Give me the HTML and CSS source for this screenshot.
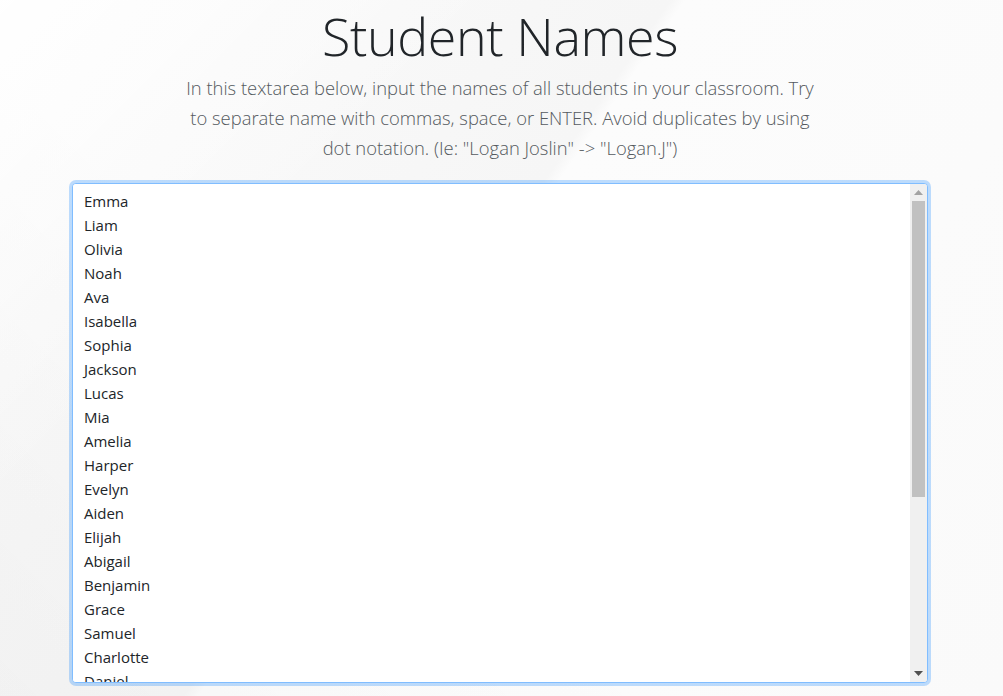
FILE: index.html
```html
<!DOCTYPE html>
<html lang="en">
<head>
<meta charset="utf-8">
<title>Student Names</title>
<link rel="stylesheet" href="styles.css">
</head>
<body>
<main class="page">
  <h1 class="title">Student Names</h1>
  <p class="lead">In this textarea below, input the names of all students in your classroom. Try to separate name with commas, space, or ENTER. Avoid duplicates by using dot notation. (Ie: "Logan Joslin" -&gt; "Logan.J")</p>
  <div class="field">
    <textarea class="names" id="names" spellcheck="false">Emma
Liam
Olivia
Noah
Ava
Isabella
Sophia
Jackson
Lucas
Mia
Amelia
Harper
Evelyn
Aiden
Elijah
Abigail
Benjamin
Grace
Samuel
Charlotte
Daniel
Emily
Henry
Ella
Matthew
Scarlett
Michael
Chloe
James
Lily
Alexander
Zoe</textarea>
    <div class="scrollbar" aria-hidden="true">
      <div class="sb-btn">
        <svg width="9" height="5" viewBox="0 0 9 5"><polygon points="0,5 9,5 4.5,0" fill="#a3a3a3"/></svg>
      </div>
      <div class="sb-track"><div class="sb-thumb"></div></div>
      <div class="sb-btn">
        <svg width="9" height="5" viewBox="0 0 9 5"><polygon points="0,0 9,0 4.5,5" fill="#505050"/></svg>
      </div>
    </div>
  </div>
</main>
<script src="app.js"></script>
</body>
</html>
```

FILE: styles.css
```css
html, body {
  margin: 0;
  padding: 0;
  height: 100%;
}
body {
  background-color: #f8f8f8;
  background-image:
    linear-gradient(135deg, rgba(255,255,255,0.9) 0%, rgba(255,255,255,0) 30%),
    linear-gradient(45deg, rgba(0,0,0,0.025) 0%, rgba(0,0,0,0) 40%),
    linear-gradient(125deg, #fbfbfb 0%, #f6f6f6 45%, #fcfcfc 46%, #fafafa 100%);
  font-family: "Open Sans", "Noto Sans", "Liberation Sans", sans-serif;
  color: #212529;
  overflow: hidden;
}
.page {
  display: flex;
  flex-direction: column;
  align-items: center;
  padding-top: 0;
  padding-right: 3px;
}
.title {
  margin: 0;
  font-size: 52px;
  font-weight: 300;
  line-height: 71px;
  color: #212529;
  letter-spacing: -0.4px;
}
.lead {
  margin: 2px 0 20px;
  width: 640px;
  text-align: center;
  font-size: 18.4px;
  font-weight: 300;
  line-height: 30px;
  color: #555a60;
}
.field {
  display: flex;
  box-sizing: border-box;
  width: 856px;
  height: 500px;
  border: 1px solid #80bdff;
  border-radius: 4px;
  box-shadow: 0 0 0 3px rgba(0,123,255,0.25);
  background: #fff;
  overflow: hidden;
}
.names {
  flex: 1;
  box-sizing: border-box;
  height: 100%;
  margin: 0;
  padding: 5px 11px;
  border: 0;
  outline: none;
  resize: none;
  background: #fff;
  font-family: "Open Sans", "Noto Sans", "Liberation Sans", sans-serif;
  font-size: 15px;
  line-height: 24px;
  color: #212529;
  overflow: hidden;
  caret-color: #000;
}
.names:focus {
  outline: none;
}
.scrollbar {
  display: flex;
  flex-direction: column;
  width: 17px;
  flex: none;
  background: #f0f0f0;
}
.sb-btn {
  height: 17px;
  display: flex;
  align-items: center;
  justify-content: center;
  flex: none;
}
.sb-track {
  flex: 1;
  display: flex;
  flex-direction: column;
  padding: 0 2px;
}
.sb-thumb {
  height: 296px;
  background: #c1c1c1;
}
```

FILE: app.js
```js
var ta = document.getElementById('names');
var pos = ta.value.indexOf('Elijah') + 'Elijah'.length;
ta.focus();
ta.setSelectionRange(pos, pos);
ta.scrollTop = 0;
```
